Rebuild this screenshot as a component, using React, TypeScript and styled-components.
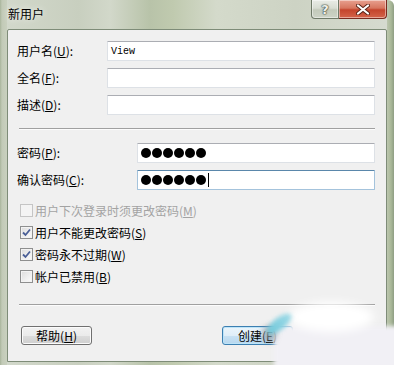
import React from "react";
import styled, { createGlobalStyle } from "styled-components";

const Global = createGlobalStyle`
  html, body { margin: 0; padding: 0; background: #fff; }
  body { font-family: "Noto Sans CJK SC", "Liberation Sans", sans-serif; }
`;

const Window = styled.div`
  position: relative;
  width: 394px;
  height: 365px;
  overflow: hidden;
  display: flex;
  flex-direction: column;
  border-radius: 0 6px 0 0;
  background:
    linear-gradient(90deg, #a8b49b 0px, #c2cab7 2px, #c9d0bf 7px, transparent 7px),
    linear-gradient(270deg, #8f9e84 0px, #a9b898 3px, #bcc6ae 7px, transparent 7px),
    linear-gradient(90deg, #d3d9cc 0%, #c8cfbf 20%, #d2d8ca 28%, #b8c3a9 38%, #c0caaf 44%, #d4dacb 55%, #cdd3c4 75%, #d6dbd0 100%);
`;

const TitleBar = styled.div`
  height: 29px;
  flex: none;
  display: flex;
  align-items: flex-start;
  justify-content: space-between;
  padding: 0 7px 0 8px;
`;

const Title = styled.div`
  margin-top: 7px;
  font-size: 12px;
  line-height: 14px;
  color: #000;
  text-shadow: 0 0 6px rgba(255, 255, 255, 0.9);
`;

const Caption = styled.div`
  display: flex;
`;

const CapButton = styled.div<{ $close?: boolean }>`
  width: ${(p) => (p.$close ? 48 : 28)}px;
  height: 19px;
  box-sizing: border-box;
  display: flex;
  align-items: center;
  justify-content: center;
  border: 1px solid ${(p) => (p.$close ? "#7a2b20" : "#6f7a68")};
  border-top: none;
  border-radius: ${(p) => (p.$close ? "0 0 4px 0" : "0 0 0 4px")};
  ${(p) => (p.$close ? "border-left: none;" : "")}
  box-shadow: inset 0 0 0 1px rgba(255, 255, 255, 0.45);
  background: ${(p) =>
    p.$close
      ? "linear-gradient(#e8a190 0%, #d7765f 45%, #c4442c 55%, #d4644a 100%)"
      : "linear-gradient(#e9ece6 0%, #d8ddd3 45%, #c3cabb 55%, #cdd3c6 100%)"};
`;

const HelpGlyph = styled.span`
  font-family: "DejaVu Sans", sans-serif;
  font-weight: bold;
  font-size: 13px;
  line-height: 13px;
  color: #eef0ec;
  text-shadow: 0 0 1px #3c4438, 0 0 1px #3c4438, 0 0 2px #3c4438;
`;

const Client = styled.div`
  flex: 1;
  margin: 0 7px 3px;
  background: #f0f0f0;
  border: 1px solid #7e8c78;
  border-radius: 2px 2px 0 0;
  display: flex;
  flex-direction: column;
  padding: 11px 11px 0 9px;
`;

const FieldGrid = styled.div<{ $labelWidth: number }>`
  display: grid;
  grid-template-columns: ${(p) => p.$labelWidth}px 1fr;
  grid-auto-rows: 20px;
  row-gap: 7px;
  align-items: center;
`;

const Label = styled.label`
  font-size: 12px;
  line-height: 14px;
  color: #000;
  white-space: nowrap;
`;

const Input = styled.div<{ $focused?: boolean }>`
  height: 20px;
  box-sizing: border-box;
  background: #fff;
  border: 1px solid ${(p) => (p.$focused ? "#a4c3dc" : "#dde1e6")};
  border-top-color: ${(p) => (p.$focused ? "#5a87ab" : "#abadb3")};
  border-radius: 1px;
  display: flex;
  align-items: center;
  padding-left: 3px;
`;

const InputText = styled.span`
  font-family: "Liberation Mono", monospace;
  font-size: 10px;
  color: #000;
`;

const Dots = styled.div`
  display: flex;
  align-items: center;
  gap: 1px;
`;

const Dot = styled.span`
  width: 10px;
  height: 10px;
  border-radius: 50%;
  background: #000;
`;

const Caret = styled.span`
  width: 1px;
  height: 14px;
  background: #000;
  margin-left: 1px;
`;

const Separator = styled.div<{ $top: number; $bottom: number }>`
  height: 1px;
  background: #a0a0a0;
  border-bottom: 1px solid #fcfcfc;
  margin: ${(p) => p.$top}px 0 ${(p) => p.$bottom}px 2px;
`;

const Checks = styled.div`
  margin-top: 9px;
  padding-left: 3px;
  display: flex;
  flex-direction: column;
`;

const CheckRow = styled.div<{ $disabled?: boolean }>`
  height: 22px;
  display: flex;
  align-items: center;
  gap: 2px;
  font-size: 12px;
  color: ${(p) => (p.$disabled ? "#a3a3a3" : "#000")};
`;

const Box = styled.span<{ $disabled?: boolean }>`
  width: 13px;
  height: 13px;
  box-sizing: border-box;
  flex: none;
  border: 1px solid ${(p) => (p.$disabled ? "#c5c5c5" : "#8e8f8f")};
  background: ${(p) =>
    p.$disabled
      ? "#f4f4f4"
      : "linear-gradient(135deg, #dcdcdc 0%, #f0f0f0 60%, #fbfbfb 100%)"};
  box-shadow: inset 0 0 0 1px ${(p) => (p.$disabled ? "#f4f4f4" : "#f3f3f3")};
  display: flex;
  align-items: center;
  justify-content: center;
`;

const ButtonRow = styled.div`
  margin-top: 20px;
  display: flex;
  gap: 130px;
  padding-left: 4px;
`;

const Button = styled.div<{ $default?: boolean }>`
  width: 71px;
  height: 19px;
  box-sizing: border-box;
  border: 1px solid ${(p) => (p.$default ? "#3c7fb1" : "#707070")};
  border-radius: 3px;
  box-shadow: inset 0 0 0 1px ${(p) => (p.$default ? "#bde4f8" : "#fbfbfb")};
  background: ${(p) =>
    p.$default
      ? "linear-gradient(#ecf5fb 0%, #dfeef8 50%, #c9e2f3 50%, #b7d7ee 100%)"
      : "linear-gradient(#f2f2f2 0%, #ebebeb 50%, #dddddd 50%, #cfcfcf 100%)"};
  display: flex;
  align-items: center;
  justify-content: center;
  font-size: 12px;
  line-height: 14px;
  color: #000;
`;

const Patch = styled.div`
  position: absolute;
  left: 274px;
  top: 326px;
  width: 130px;
  height: 50px;
  background: #f1f0f5;
  filter: blur(2px);
`;

const Smudge = styled.div`
  position: absolute;
  left: 288px;
  top: 302px;
  width: 86px;
  height: 30px;
  border-radius: 50%;
  background: #ffffff;
  filter: blur(5px);
`;

const Streak = styled.div`
  position: absolute;
  left: 264px;
  top: 318px;
  width: 30px;
  height: 12px;
  border-radius: 50%;
  background: linear-gradient(90deg, #6ec6d8, #9edbe8);
  transform: rotate(-38deg);
  filter: blur(2px);
`;

const Shade = styled.div`
  position: absolute;
  left: 262px;
  top: 326px;
  width: 14px;
  height: 16px;
  border-radius: 50%;
  background: #8a9097;
  filter: blur(3px);
  opacity: 0.7;
`;

function Check({ label, checked, disabled, k }: { label: string; checked?: boolean; disabled?: boolean; k: string }) {
  return (
    <CheckRow $disabled={disabled}>
      <Box $disabled={disabled}>
        {checked && (
          <svg width="9" height="9" viewBox="0 0 9 9">
            <path d="M1 4.5 L3.5 7 L8 1.5" fill="none" stroke="#4a5f97" strokeWidth="1.8" />
          </svg>
        )}
      </Box>
      <span>
        {label}(<u>{k}</u>)
      </span>
    </CheckRow>
  );
}

export default function App() {
  return (
    <>
      <Global />
      <Window>
        <TitleBar>
          <Title>新用户</Title>
          <Caption>
            <CapButton>
              <HelpGlyph>?</HelpGlyph>
            </CapButton>
            <CapButton $close>
              <svg width="14" height="11" viewBox="0 0 14 11">
                <path d="M2 1.5 L12 9.5 M12 1.5 L2 9.5" stroke="#5a2418" strokeWidth="4" strokeLinecap="round" />
                <path d="M2 1.5 L12 9.5 M12 1.5 L2 9.5" stroke="#ffffff" strokeWidth="2.2" strokeLinecap="round" />
              </svg>
            </CapButton>
          </Caption>
        </TitleBar>
        <Client>
          <FieldGrid $labelWidth={90}>
            <Label>
              用户名(<u>U</u>):
            </Label>
            <Input>
              <InputText>View</InputText>
            </Input>
            <Label>
              全名(<u>F</u>):
            </Label>
            <Input />
            <Label>
              描述(<u>D</u>):
            </Label>
            <Input />
          </FieldGrid>
          <Separator $top={13} $bottom={13} />
          <FieldGrid $labelWidth={120}>
            <Label>
              密码(<u>P</u>):
            </Label>
            <Input>
              <Dots>
                {Array.from({ length: 6 }).map((_, i) => (
                  <Dot key={i} />
                ))}
              </Dots>
            </Input>
            <Label>
              确认密码(<u>C</u>):
            </Label>
            <Input $focused>
              <Dots>
                {Array.from({ length: 6 }).map((_, i) => (
                  <Dot key={i} />
                ))}
                <Caret />
              </Dots>
            </Input>
          </FieldGrid>
          <Checks>
            <Check label="用户下次登录时须更改密码" k="M" disabled />
            <Check label="用户不能更改密码" k="S" checked />
            <Check label="密码永不过期" k="W" checked />
            <Check label="帐户已禁用" k="B" />
          </Checks>
          <Separator $top={17} $bottom={0} />
          <ButtonRow>
            <Button>
              帮助(<u>H</u>)
            </Button>
            <Button $default>
              创建(<u>E</u>)
            </Button>
          </ButtonRow>
        </Client>
        <Patch />
        <Smudge />
        <Shade />
        <Streak />
      </Window>
    </>
  );
}
